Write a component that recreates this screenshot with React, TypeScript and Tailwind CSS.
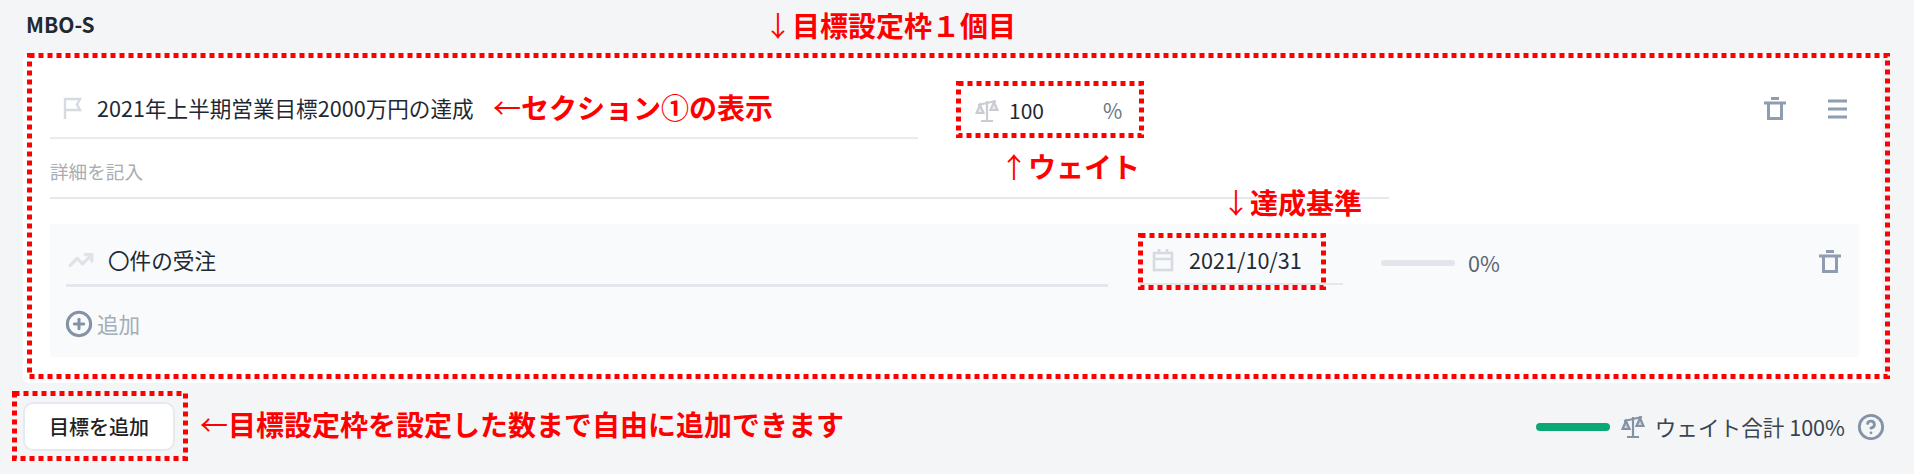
import React from "react";
import { CircleHelp, CirclePlus, TrendingUp } from "lucide-react";

const font = "font-['Noto_Sans_CJK_JP','Noto_Sans',sans-serif]";

// red dashed annotation frame drawn over the form
function DashedBox({ className, w, h }: { className: string; w: number; h: number }) {
  return (
    <svg className={`absolute ${className}`} width={w} height={h} viewBox={`0 0 ${w} ${h}`} fill="none">
      <rect x="2.5" y="2.5" width={w - 5} height={h - 5} stroke="#ff0000" strokeWidth="5" strokeDasharray="5 4" />
    </svg>
  );
}

function Note({ className, children }: { className: string; children: React.ReactNode }) {
  return (
    <div className={`absolute whitespace-nowrap text-[28px] font-bold leading-none text-[#ff0000] ${className}`}>
      {children}
    </div>
  );
}

function Arrow({ children }: { children: React.ReactNode }) {
  return <span className="font-normal">{children}</span>;
}

function FlagIcon() {
  return (
    <svg width="20" height="24" viewBox="0 0 20 24" fill="none" stroke="#d5dbe1" strokeWidth="2.4">
      <path d="M2 23V3h15l-3 5.500 3 5.500H2" />
    </svg>
  );
}

function CalendarIcon() {
  return (
    <svg width="22" height="24" viewBox="0 0 22 24" fill="none" stroke="#d5dbe1" strokeWidth="2.6">
      <rect x="2" y="5" width="18" height="17" />
      <path d="M2 11h18M7 1v5M15 1v5" />
    </svg>
  );
}

function TrashIcon() {
  return (
    <svg width="24" height="23" viewBox="0 0 24 23" fill="none" stroke="#8e9db0" strokeWidth="3">
      <path d="M1 6h22M8 1.500h8M5.500 6v15.500h13V6" />
    </svg>
  );
}

function MenuIcon() {
  return (
    <svg width="19" height="20" viewBox="0 0 19 20" fill="none" stroke="#8e9db0" strokeWidth="3">
      <path d="M0 2h19M0 10h19M0 18h19" />
    </svg>
  );
}

function ScaleIcon({ color }: { color: string }) {
  return (
    <svg width="24" height="22" viewBox="0 0 24 22" fill="none" stroke={color} strokeWidth="2.2">
      <path d="M12 1v19M6 21h12M3 5l9-2 9-2" />
      <path d="M5 5l-3.500 8h7zM19 2l-3.500 8h7z" fill={color} fillOpacity="0.35" />
    </svg>
  );
}

export default function App() {
  return (
    <div className={`relative h-[474px] w-full overflow-hidden bg-[#f4f5f7] pl-[23px] pr-[32px] text-[#1f2933] ${font}`}>
      <div className="flex h-[54px] items-start pl-[3px] pt-[9px] text-[21px] font-bold leading-[30px]">MBO-S</div>

      <div className="h-[329px] rounded-md bg-white pl-[27px] pr-[23px]">
        <div className="flex h-[85px]">
          <div className="flex w-[868px] items-center gap-[14px] border-b-2 border-[#e8ebef] pl-[13px] pt-[25px]">
            <FlagIcon />
            <span className="text-[21.6px] leading-none">2021年上半期営業目標2000万円の達成</span>
          </div>
          <div className="ml-[57px] flex w-[170px] items-center pt-[28px]">
            <ScaleIcon color="#c9cdd2" />
            <span className="ml-[10px] w-[94px] text-[21px] leading-none">100</span>
            <span className="text-[21px] leading-none text-[#6b7785]">%</span>
          </div>
          <div className="ml-auto flex items-center gap-[41px] pr-[12px] pt-[24px]">
            <TrashIcon />
            <MenuIcon />
          </div>
        </div>

        <div className="flex h-[60px] w-[1339px] items-center border-b-2 border-[#e4e9ee] pt-[6px] text-[18.6px] leading-none text-[#a9adb2]">
          詳細を記入
        </div>

        <div className="mt-[25px] h-[133px] bg-[#f9fafc] pl-[16px]">
          <div className="flex h-[63px] items-stretch">
            <div className="flex w-[1042px] items-center gap-[14px] border-b-[3px] border-[#e4e8ec] pl-[2px] pt-[12px]">
              <TrendingUp size={26} strokeWidth={3} className="text-[#dfe3e8]" />
              <span className="text-[21.6px] leading-none">〇件の受注</span>
            </div>
            <div className="ml-[31px] flex h-[61px] w-[204px] items-center gap-[15px] border-b-2 border-[#e4e8ec] pl-[13px] pt-[12px]">
              <CalendarIcon />
              <span className="text-[21.6px] leading-none">2021/10/31</span>
            </div>
            <div className="ml-[38px] flex items-center pt-[15px]">
              <div className="h-[6px] w-[74px] rounded-full bg-[#e2e6ea]" />
              <span className="ml-[13px] text-[21.6px] leading-none text-[#5a6672]">0%</span>
            </div>
            <div className="ml-auto flex items-center pr-[17px] pt-[11px]">
              <TrashIcon />
            </div>
          </div>
          <div className="-ml-[1px] mt-[23px] flex items-center gap-[4px] text-[21.6px] leading-none text-[#a3aeb9]">
            <CirclePlus size={28} strokeWidth={2.6} className="text-[#8492a6]" />
            <span>追加</span>
          </div>
        </div>
      </div>

      <div className="mt-[19px] flex items-start justify-between">
        <button className="flex h-[49px] w-[152px] items-center justify-center rounded-[10px] border-2 border-[#e6e9ed] bg-white text-[20px] font-medium text-[#222]">
          目標を追加
        </button>
        <div className="mr-[-3px] mt-[11px] flex items-center">
          <div className="h-[8px] w-[74px] rounded-full bg-[#0aa873]" />
          <div className="ml-[11px]">
            <ScaleIcon color="#8492a6" />
          </div>
          <span className="ml-[10px] text-[21.6px] leading-none text-[#3a4450]">ウェイト合計 100%</span>
          <CircleHelp size={28} strokeWidth={2.4} className="ml-[12px] text-[#8492a6]" />
        </div>
      </div>

      <DashedBox className="left-[27px] top-[53px]" w={1863} h={326} />
      <DashedBox className="left-[956px] top-[81px]" w={188} h={57} />
      <DashedBox className="left-[1138px] top-[233px]" w={188} h={57} />
      <DashedBox className="left-[12px] top-[391px]" w={176} h={70} />

      <Note className="left-[764px] top-[11px]">
        <Arrow>↓</Arrow>目標設定枠１個目
      </Note>
      <Note className="left-[493px] top-[93px]">
        <Arrow>←</Arrow>セクション①の表示
      </Note>
      <Note className="left-[1000px] top-[152px]">
        <Arrow>↑</Arrow>ウェイト
      </Note>
      <Note className="left-[1222px] top-[188px]">
        <Arrow>↓</Arrow>達成基準
      </Note>
      <Note className="left-[200px] top-[410px]">
        <Arrow>←</Arrow>目標設定枠を設定した数まで自由に追加できます
      </Note>
    </div>
  );
}
